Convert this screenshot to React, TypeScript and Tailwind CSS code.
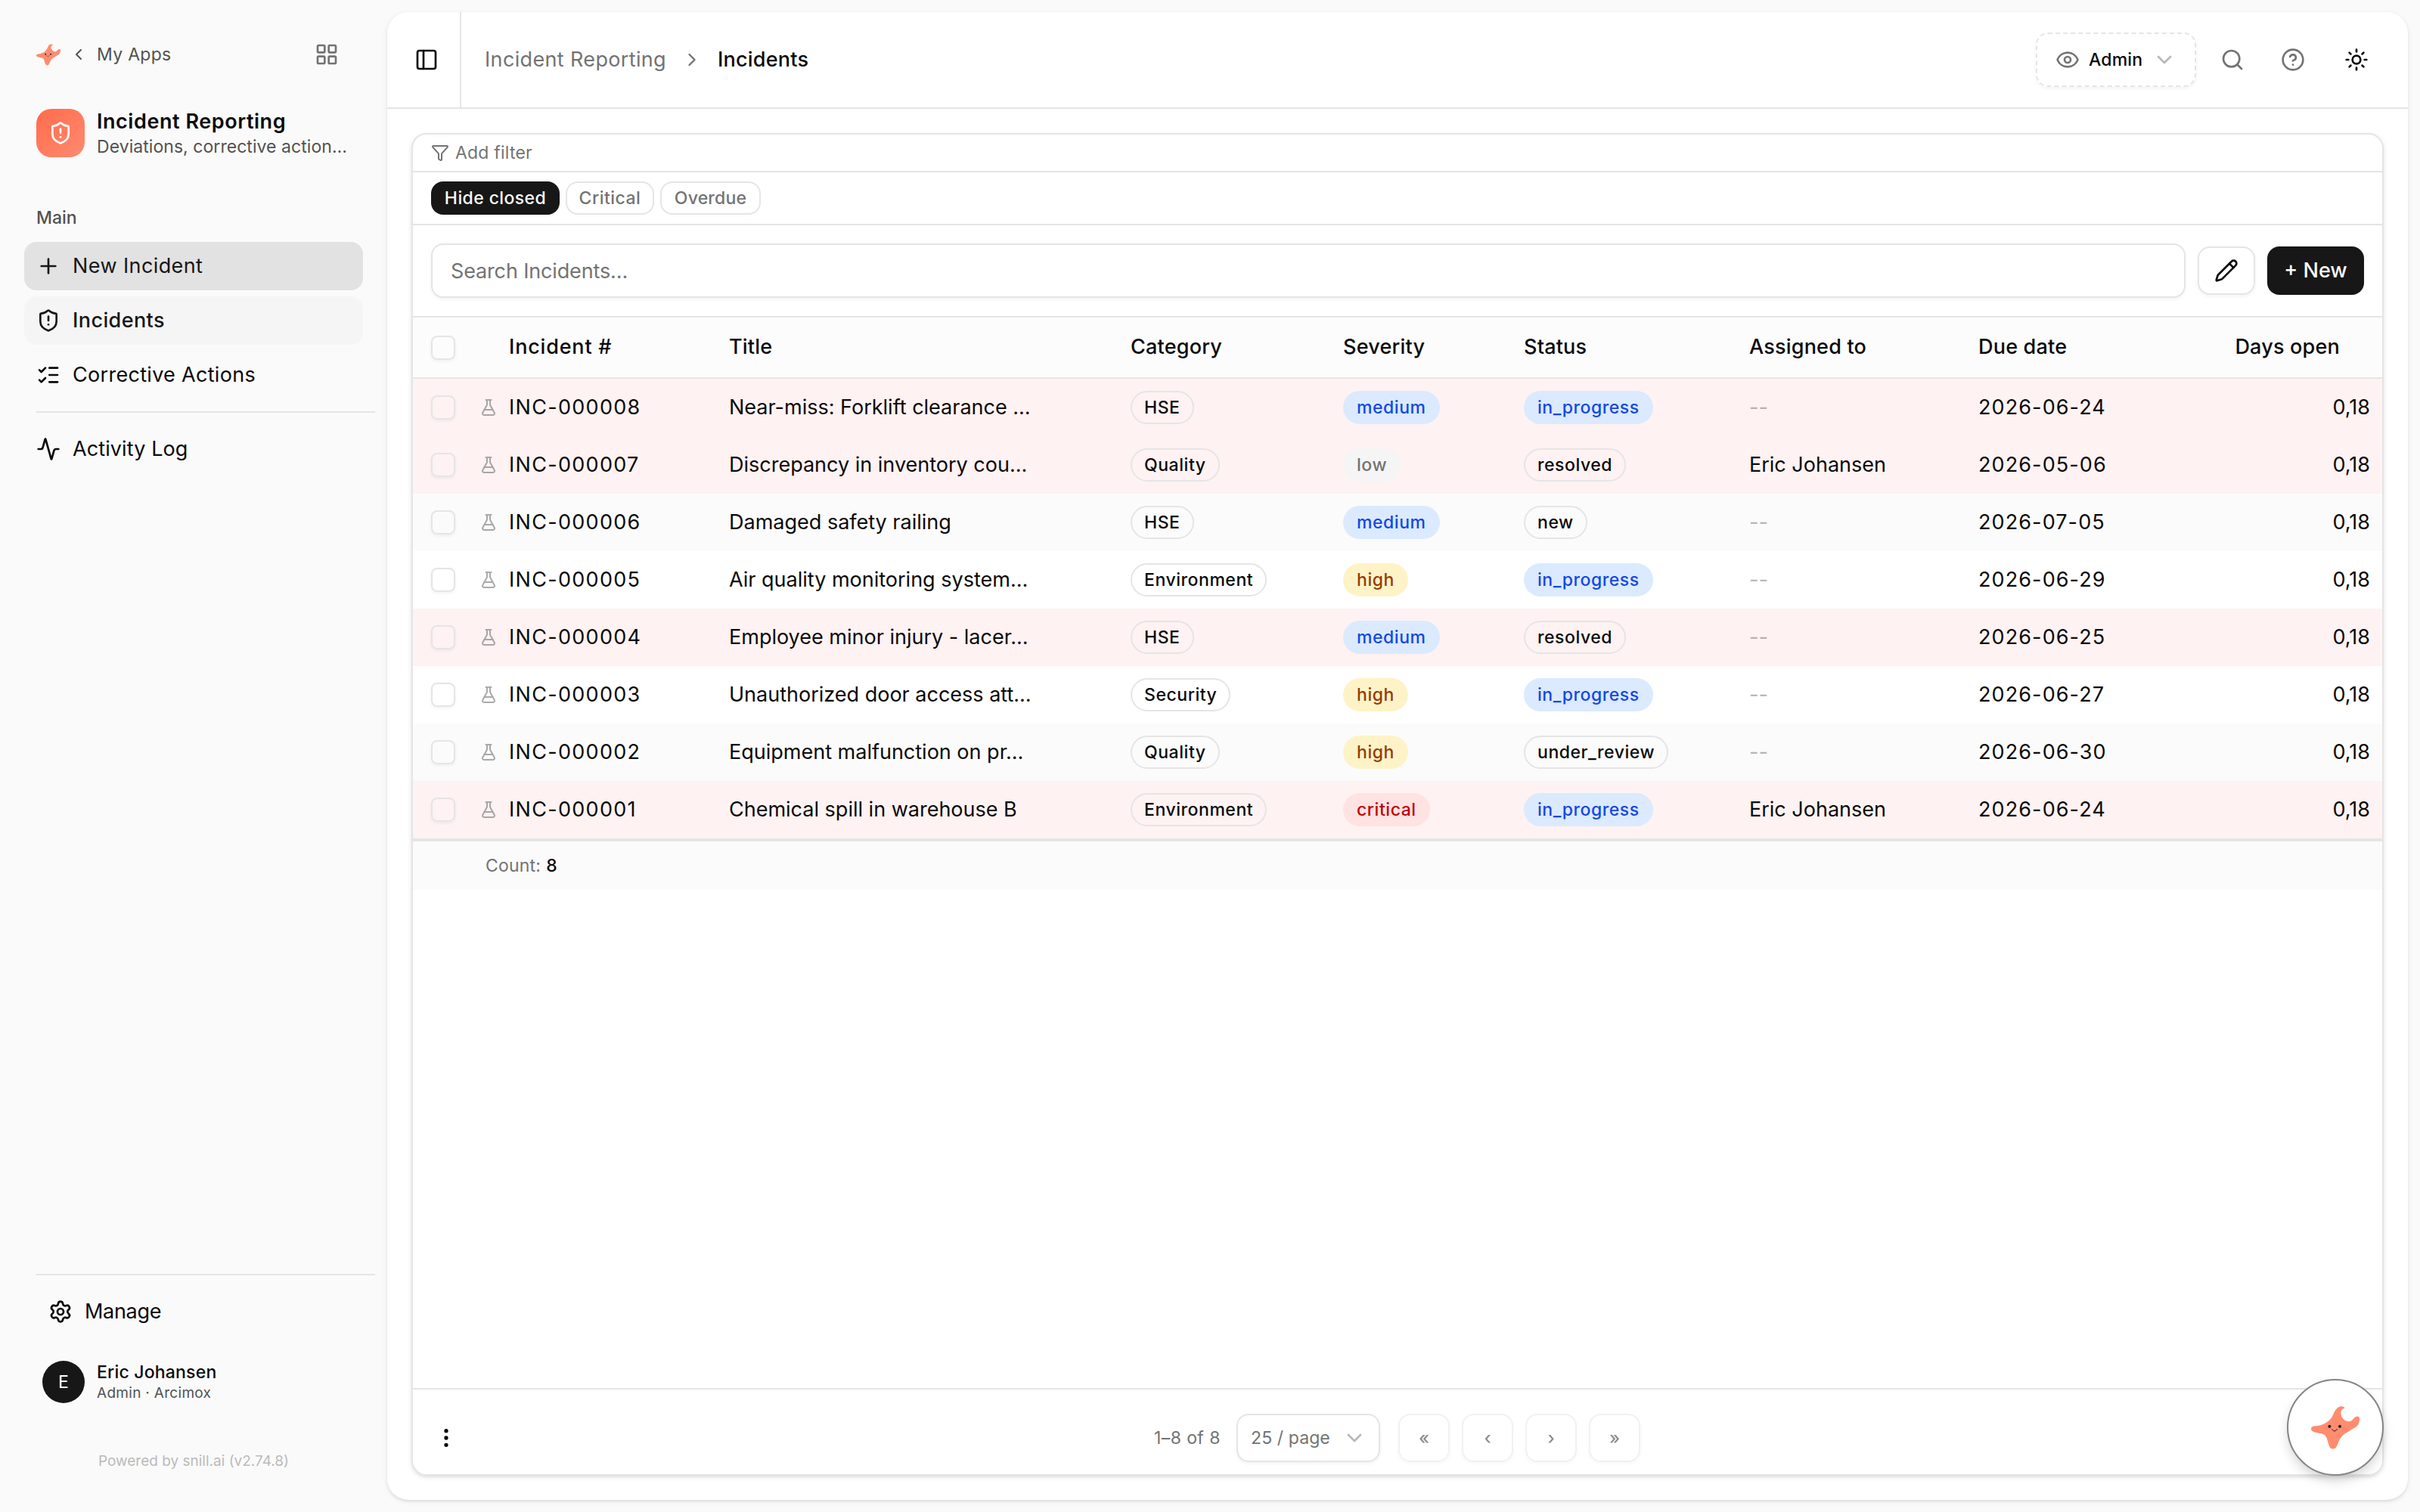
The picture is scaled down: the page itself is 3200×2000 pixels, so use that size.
import type { ReactNode } from 'react'
import {
  Activity,
  ChevronDown,
  ChevronLeft,
  ChevronRight,
  CircleHelp,
  EllipsisVertical,
  Eye,
  FlaskConical,
  Funnel,
  LayoutGrid,
  ListChecks,
  PanelLeft,
  Pencil,
  Plus,
  Search,
  Settings,
  ShieldAlert,
  Sun,
} from 'lucide-react'

type Incident = {
  id: string
  title: string
  category: string
  severity: string
  status: string
  assigned?: string
  due: string
  overdue?: boolean
}

const incidents: Incident[] = [
  { id: 'INC-000008', title: 'Near-miss: Forklift clearance …', category: 'HSE', severity: 'medium', status: 'in_progress', due: '2026-06-24', overdue: true },
  { id: 'INC-000007', title: 'Discrepancy in inventory cou…', category: 'Quality', severity: 'low', status: 'resolved', assigned: 'Eric Johansen', due: '2026-05-06', overdue: true },
  { id: 'INC-000006', title: 'Damaged safety railing', category: 'HSE', severity: 'medium', status: 'new', due: '2026-07-05' },
  { id: 'INC-000005', title: 'Air quality monitoring system…', category: 'Environment', severity: 'high', status: 'in_progress', due: '2026-06-29' },
  { id: 'INC-000004', title: 'Employee minor injury - lacer…', category: 'HSE', severity: 'medium', status: 'resolved', due: '2026-06-25', overdue: true },
  { id: 'INC-000003', title: 'Unauthorized door access att…', category: 'Security', severity: 'high', status: 'in_progress', due: '2026-06-27' },
  { id: 'INC-000002', title: 'Equipment malfunction on pr…', category: 'Quality', severity: 'high', status: 'under_review', due: '2026-06-30' },
  { id: 'INC-000001', title: 'Chemical spill in warehouse B', category: 'Environment', severity: 'critical', status: 'in_progress', assigned: 'Eric Johansen', due: '2026-06-24', overdue: true },
]

const badgeStyles: Record<string, string> = {
  medium: 'border-transparent bg-[#dbeafe] text-[#1447e6]',
  in_progress: 'border-transparent bg-[#dbeafe] text-[#1447e6]',
  high: 'border-transparent bg-[#fef3c6] text-[#973c00]',
  critical: 'border-transparent bg-[#ffe2e2] text-[#c10007]',
  low: 'border-transparent bg-[#f5f5f5] text-[#737373]',
}

const columns =
  'grid grid-cols-[88px_39px_291px_531px_281px_239px_298px_303px_1fr_200px] items-center'

function Badge({ label }: { label: string }) {
  return (
    <span
      className={`inline-flex h-11 items-center justify-self-start rounded-[22px] border-2 px-4 text-[23px] font-[450] tracking-[0.55px] ${
        badgeStyles[label] ?? 'border-[#e5e5e5] text-[#0a0a0a]'
      }`}
    >
      {label}
    </span>
  )
}

function Checkbox() {
  return (
    <span className="ml-6 block size-8 rounded-lg border-2 border-[#e5e5e5] shadow-[0_2px_4px_rgba(0,0,0,0.05)]" />
  )
}

function Starfish({ className }: { className: string }) {
  return (
    <svg viewBox="288 239 192 170" className={className}>
      <path
        d="M288 328C288 321 295 318 304 317.500C332 315 357 303 371 281C379 265 385 248 397 242C405 238 416 239 420 244C422 247 420 247 416 248C405 253 403 268 410 281C416 293 428 300 439 299C451 298 455 287 464 281C472 277 479 279 480 287C481 301 475 316 465 322C446 334 418 348 407 362C397 374 395 391 387 402C382 410 367 410 362 401C355 388 353 366 344 355C335 345 311 347 297 340C290 337 288 333 288 328Z"
        fill="#ff8c6f"
      />
      <circle cx="348" cy="327.500" r="4.500" fill="#ff7d75" />
      <circle cx="416" cy="327.500" r="4.500" fill="#ff7d75" />
      <circle cx="361" cy="319" r="6.200" fill="#262626" />
      <circle cx="402" cy="319" r="6.200" fill="#262626" />
      <path d="M371 330C375 340 387 340 391 330" fill="none" stroke="#262626" strokeWidth="3" strokeLinecap="round" />
    </svg>
  )
}

function NavItem({ icon, label, className = 'tracking-[0.3px]' }: { icon: ReactNode; label: string; className?: string }) {
  return (
    <a className={`flex h-16 w-[448px] items-center gap-4 rounded-2xl px-4 text-[27px] ${className}`}>
      {icon}
      <span>{label}</span>
    </a>
  )
}

function Sidebar() {
  return (
    <aside className="flex w-[512px] shrink-0 flex-col pt-10 text-[#0a0a0a]">
      <div className="flex h-16 items-center pr-16 pl-12 text-[#525252]">
        <Starfish className="h-[29px] w-8" />
        <ChevronLeft className="ml-3 size-6" />
        <span className="ml-3 text-[23px] tracking-[0.3px]">My Apps</span>
        <LayoutGrid className="ml-auto size-8 text-[#737373]" />
      </div>

      <div className="mt-10 flex h-16 items-center gap-4 pl-12">
        <div className="flex size-16 items-center justify-center rounded-[20px] bg-linear-to-br from-[#ff6b4a] to-[#ff8a70] text-white">
          <ShieldAlert className="size-8" />
        </div>
        <div className="whitespace-nowrap">
          <div className="text-[27px] leading-[35px] font-semibold tracking-[0.55px]">Incident Reporting</div>
          <div className="text-[23px] leading-8 tracking-[0.05px] text-[#525252]">
            Deviations, corrective action…
          </div>
        </div>
      </div>

      <div className="mt-14 flex h-12 items-center pl-12 text-[23px] font-[450] text-[#525252]">Main</div>
      <nav className="mt-2 flex flex-col gap-2 pl-8">
        <NavItem icon={<Plus className="size-8" />} label="New Incident" className="bg-[#e2e2e2] tracking-[0.4px] text-[#171717]" />
        <NavItem icon={<ShieldAlert className="size-8" />} label="Incidents" className="bg-[#f5f5f5] font-[450] tracking-[0.4px] text-[#171717]" />
        <NavItem icon={<ListChecks className="size-8" />} label="Corrective Actions" />
      </nav>
      <div className="mt-4 mr-4 ml-12 h-0.5 bg-[#e5e5e5]" />
      <nav className="mt-4 pl-8">
        <NavItem icon={<Activity className="size-8" />} label="Activity Log" className="tracking-[0.1px]" />
      </nav>

      <div className="mt-auto mr-4 ml-12 h-0.5 bg-[#e5e5e5]" />
      <nav className="mt-4 pl-12">
        <NavItem icon={<Settings className="size-8" />} label="Manage" className="tracking-[-0.3px]" />
      </nav>
      <div className="mt-[33px] flex h-14 items-center gap-4 pl-14">
        <div className="flex size-14 items-center justify-center rounded-full bg-[#171717] text-[23px] text-white">
          E
        </div>
        <div>
          <div className="text-[23px] leading-[30px] font-[450] tracking-[0.2px]">Eric Johansen</div>
          <div className="text-[19px] leading-[26px] tracking-[0.3px] text-[#525252]">Admin · Arcimox</div>
        </div>
      </div>
      <div className="mt-[61px] mb-[51px] text-center text-[19px] leading-8 text-[#bababa]">
        Powered by snill.ai (v2.74.8)
      </div>
    </aside>
  )
}

function TopBar() {
  return (
    <header className="flex h-32 shrink-0 items-center border-b-2 border-[#e5e5e5] pr-[50px]">
      <div className="flex h-full w-[98px] items-center justify-center border-r-2 border-[#e5e5e5] pl-2">
        <PanelLeft className="size-8" />
      </div>
      <div className="ml-[31px] flex items-center gap-5 text-[27px]">
        <span className="tracking-[0.35px] text-[#737373]">Incident Reporting</span>
        <ChevronRight className="size-7 text-[#737373]" />
        <span className="font-[450] tracking-[0.2px]">Incidents</span>
      </div>
      <div className="ml-auto flex items-center">
        <div className="flex h-[72px] w-[212px] items-center rounded-2xl border-2 border-dashed border-[#e5e5e5] px-6 shadow-[0_2px_4px_rgba(0,0,0,0.05)]">
          <Eye className="size-8 text-[#737373]" />
          <span className="ml-3 text-[23px] font-[450] tracking-[0.2px]">Admin</span>
          <ChevronDown className="ml-auto size-8 text-[#737373] opacity-50" />
        </div>
        <Search className="ml-8 size-8 text-[#737373]" />
        <CircleHelp className="ml-12 size-8 text-[#737373]" />
        <Sun className="mr-0.5 ml-[52px] size-8" />
      </div>
    </header>
  )
}

function Filters() {
  return (
    <>
      <div className="flex h-[50px] shrink-0 items-center gap-2 border-b-2 border-[#e5e5e5] px-6 text-[23px] text-[#737373]">
        <Funnel className="size-6" />
        <span className="tracking-[0.2px]">Add filter</span>
      </div>
      <div className="flex h-[70px] shrink-0 items-center gap-2 border-b-2 border-[#e5e5e5] px-6 text-[23px] font-[450]">
        <button className="h-11 w-[170px] rounded-2xl bg-[#171717] tracking-[0.4px] text-[#fafafa]">Hide closed</button>
        <button className="h-11 w-[117px] rounded-2xl border-2 border-[#e5e5e5] tracking-[0.5px] text-[#737373]">Critical</button>
        <button className="h-11 w-[133px] rounded-2xl border-2 border-[#e5e5e5] tracking-[0.2px] text-[#737373]">Overdue</button>
      </div>
      <div className="flex h-[122px] shrink-0 items-center gap-4 border-b-2 border-[#e5e5e5] px-6 text-[27px]">
        <div className="flex h-[72px] flex-1 items-center rounded-2xl border-2 border-[#e5e5e5] px-6 pt-0.5 tracking-[-0.15px] text-[#737373] shadow-[0_2px_4px_rgba(0,0,0,0.05)]">
          Search Incidents…
        </div>
        <button className="flex h-16 w-19 items-center justify-center rounded-2xl border-2 border-[#e5e5e5] shadow-[0_2px_4px_rgba(0,0,0,0.05)]">
          <Pencil className="size-8" />
        </button>
        <button className="h-16 w-32 rounded-2xl bg-[#171717] font-[450] text-[#fafafa]">+ New</button>
      </div>
    </>
  )
}

function IncidentTable() {
  return (
    <div className="text-[27px]">
      <div className={`${columns} h-[81px] border-b-2 border-[#e5e5e5] bg-[#fcfcfc] font-[450] tracking-[0.2px]`}>
        <Checkbox />
        <span />
        <span className="tracking-[0.8px]">Incident #</span>
        <span>Title</span>
        <span>Category</span>
        <span>Severity</span>
        <span>Status</span>
        <span>Assigned to</span>
        <span>Due date</span>
        <span className="pr-14 text-right">Days open</span>
      </div>
      {incidents.map((row, i) => (
        <div
          key={row.id}
          className={`${columns} h-19 ${row.overdue ? 'bg-[#fef2f2]' : i % 2 === 0 ? 'bg-[#fbfbfb]' : ''}`}
        >
          <Checkbox />
          <FlaskConical className="size-6 text-[#737373] opacity-60" />
          <span className="tracking-[1.3px]">{row.id}</span>
          <span className="whitespace-nowrap">{row.title}</span>
          <Badge label={row.category} />
          <Badge label={row.severity} />
          <Badge label={row.status} />
          {row.assigned ? <span>{row.assigned}</span> : <span className="text-[#737373] opacity-50">--</span>}
          <span className="tracking-[1.1px]">{row.due}</span>
          <span className="pr-4 text-right">0,18</span>
        </div>
      ))}
      <div className="flex h-[68px] items-center border-t-4 border-[#e5e5e5] bg-[#fbfbfb] pl-24 text-[23px]">
        <span className="tracking-[0.2px] text-[#737373]">Count:</span>
        <span className="ml-[7px] font-[450]">8</span>
      </div>
    </div>
  )
}

function Pagination() {
  return (
    <div className="mt-auto flex h-[114px] shrink-0 items-center border-t-2 border-[#e5e5e5] pt-4 pl-7 text-[23px] text-[#737373]">
      <EllipsisVertical className="size-8 text-[#0a0a0a]" />
      <span className="ml-[920px] w-[109px] tracking-[0.4px]">1–8 of 8</span>
      <div className="flex h-16 w-[190px] items-center justify-between rounded-2xl border-2 border-[#e5e5e5] pr-4 pl-[17px] shadow-[0_2px_4px_rgba(0,0,0,0.05)]">
        <span className="tracking-[0.1px]">25 / page</span>
        <ChevronDown className="size-8 opacity-50" />
      </div>
      <div className="ml-6 flex gap-4">
        {['«', '‹', '›', '»'].map((label) => (
          <button
            key={label}
            className="h-16 w-17 rounded-2xl border-2 border-[#e5e5e5] font-medium text-[#171717] opacity-50 shadow-[0_2px_4px_rgba(0,0,0,0.05)]"
          >
            {label}
          </button>
        ))}
      </div>
    </div>
  )
}

export default function App() {
  return (
    <div className="relative flex h-[2000px] w-[3200px] overflow-hidden bg-[#fafafa] font-['Inter','Open_Sans',sans-serif] text-[#0a0a0a]">
      <Sidebar />
      <main className="my-4 mr-4 flex flex-1 flex-col rounded-[28px] bg-white shadow-[0_2px_6px_rgba(0,0,0,0.1),0_2px_4px_-2px_rgba(0,0,0,0.1)]">
        <TopBar />
        <section className="m-8 flex flex-1 flex-col overflow-hidden rounded-[20px] border-2 border-[#e5e5e5] shadow-[0_2px_6px_rgba(0,0,0,0.1),0_2px_4px_-2px_rgba(0,0,0,0.1)]">
          <Filters />
          <IncidentTable />
          <Pagination />
        </section>
      </main>

      {/* floating assistant button */}
      <button className="absolute right-12 bottom-12 flex size-32 items-center justify-center rounded-full border-2 border-[#858585] bg-white shadow-[0_8px_16px_-2px_rgba(0,0,0,0.18)]">
        <Starfish className="h-[57px] w-16" />
      </button>
    </div>
  )
}
